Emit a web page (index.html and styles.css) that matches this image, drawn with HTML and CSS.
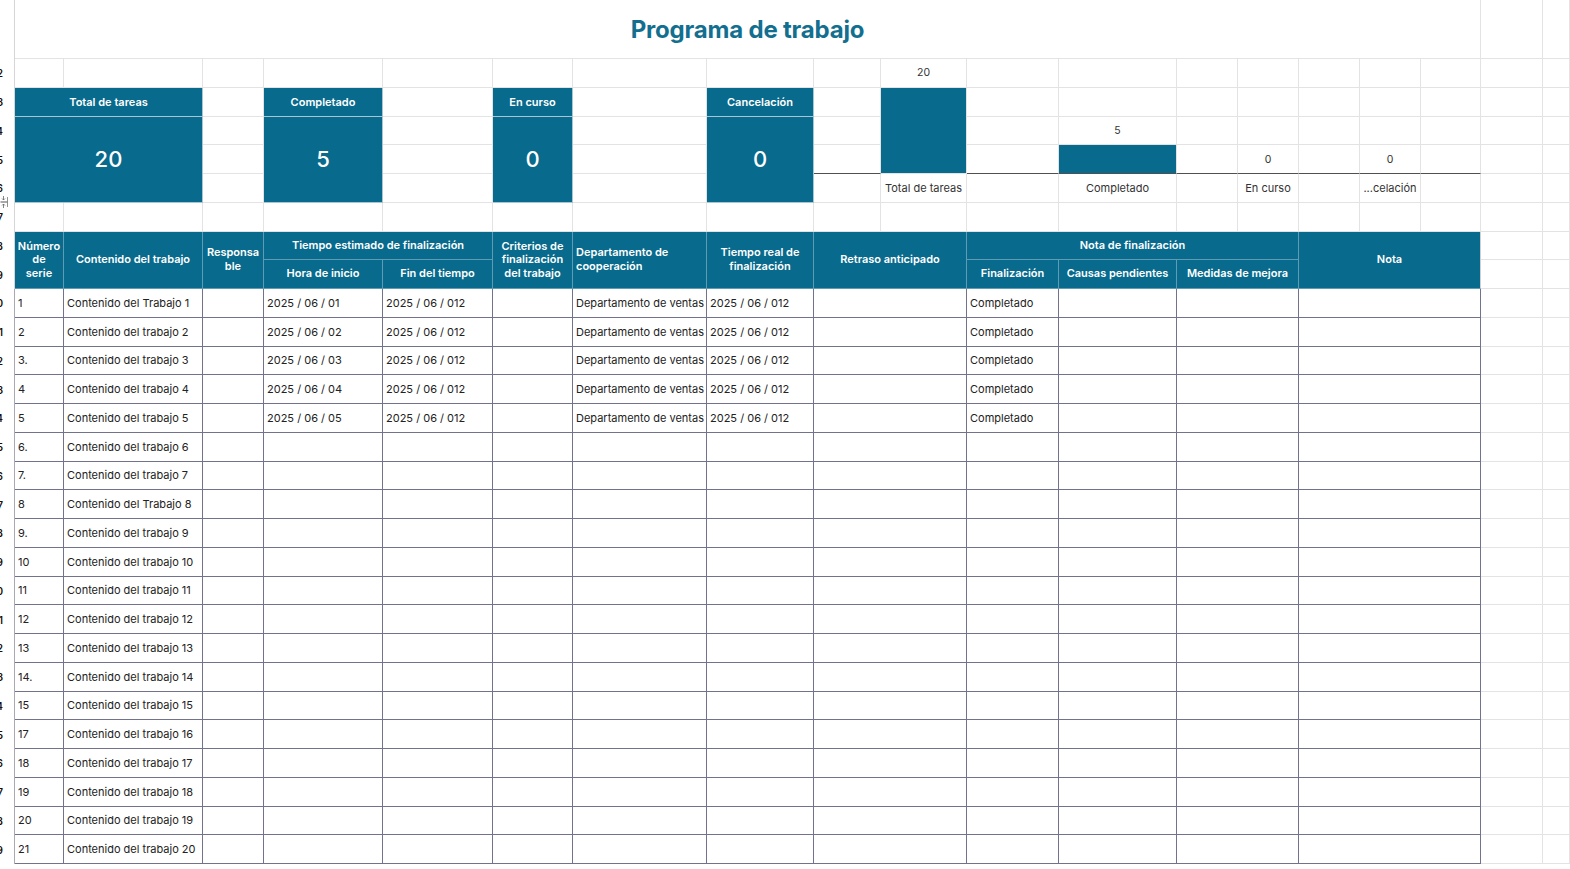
FILE: index.html
```html
<!DOCTYPE html>
<html lang="es">
<head>
<meta charset="utf-8">
<title>Programa de trabajo</title>
<link rel="stylesheet" href="styles.css">
</head>
<body>
<div class="sheet">
  <!-- row 1 -->
  <div class="c rh"></div>
  <div class="c title s17">Programa de trabajo</div>
  <div class="c"></div><div class="c"></div>

  <!-- row 2 -->
  <div class="c rh">2</div>
  <div class="c"></div><div class="c"></div><div class="c"></div><div class="c"></div><div class="c"></div>
  <div class="c"></div><div class="c"></div><div class="c"></div><div class="c"></div>
  <div class="c lbl">20</div>
  <div class="c"></div><div class="c"></div><div class="c"></div><div class="c"></div><div class="c"></div>
  <div class="c"></div><div class="c"></div><div class="c"></div><div class="c"></div>

  <!-- row 3 -->
  <div class="c rh">3</div>
  <div class="c card-head s2">Total de tareas</div>
  <div class="c"></div>
  <div class="c card-head">Completado</div>
  <div class="c"></div>
  <div class="c card-head">En curso</div>
  <div class="c"></div>
  <div class="c card-head">Cancelación</div>
  <div class="c"></div>
  <div class="c bar r3"></div>
  <div class="c"></div><div class="c"></div><div class="c"></div><div class="c"></div><div class="c"></div>
  <div class="c"></div><div class="c"></div><div class="c"></div><div class="c"></div>

  <!-- row 4 -->
  <div class="c rh">4</div>
  <div class="c card-val s2 r3">20</div>
  <div class="c"></div>
  <div class="c card-val r3">5</div>
  <div class="c"></div>
  <div class="c card-val r3">0</div>
  <div class="c"></div>
  <div class="c card-val r3">0</div>
  <div class="c"></div>
  <div class="c"></div>
  <div class="c lbl">5</div>
  <div class="c"></div><div class="c"></div><div class="c"></div><div class="c"></div><div class="c"></div>
  <div class="c"></div><div class="c"></div>

  <!-- row 5 -->
  <div class="c rh">5</div>
  <div class="c"></div>
  <div class="c"></div>
  <div class="c"></div>
  <div class="c axis"></div>
  <div class="c axis"></div>
  <div class="c bar axis"></div>
  <div class="c axis"></div>
  <div class="c axis lbl">0</div>
  <div class="c axis"></div>
  <div class="c axis lbl">0</div>
  <div class="c axis"></div>
  <div class="c"></div><div class="c"></div>

  <!-- row 6 -->
  <div class="c rh">6</div>
  <div class="c"></div>
  <div class="c"></div>
  <div class="c"></div>
  <div class="c"></div>
  <div class="c cat">Total de tareas</div>
  <div class="c"></div>
  <div class="c cat">Completado</div>
  <div class="c"></div>
  <div class="c cat">En curso</div>
  <div class="c"></div>
  <div class="c cat">...celación</div>
  <div class="c"></div>
  <div class="c"></div><div class="c"></div>

  <!-- row 7 -->
  <div class="c rh rh-icon">7
    <svg class="freeze" width="9" height="14" viewBox="0 0 9 14" aria-hidden="true">
      <path d="M0.5 7H7.5" stroke="#555" stroke-width="1"/>
      <path d="M3.5 1V5M2 3.5L3.5 5L5 3.5" stroke="#666" stroke-width="0.8" fill="none"/>
      <path d="M3.5 13V9M2 10.5L3.5 9L5 10.5" stroke="#666" stroke-width="0.8" fill="none"/>
      <path d="M7.5 2V12" stroke="#777" stroke-width="0.8"/>
    </svg>
  </div>
  <div class="c"></div><div class="c"></div><div class="c"></div><div class="c"></div><div class="c"></div>
  <div class="c"></div><div class="c"></div><div class="c"></div><div class="c"></div><div class="c"></div>
  <div class="c"></div><div class="c"></div><div class="c"></div><div class="c"></div><div class="c"></div>
  <div class="c"></div><div class="c"></div><div class="c"></div><div class="c"></div>

  <!-- row 8 header -->
  <div class="c rh">8</div>
  <div class="c hd r2">Número<br>de<br>serie</div>
  <div class="c hd r2">Contenido del trabajo</div>
  <div class="c hd r2">Responsa<br>ble</div>
  <div class="c hd s2">Tiempo estimado de finalización</div>
  <div class="c hd r2">Criterios de<br>finalización<br>del trabajo</div>
  <div class="c hd hd-left r2">Departamento de<br>cooperación</div>
  <div class="c hd r2">Tiempo real de<br>finalización</div>
  <div class="c hd s2 r2">Retraso anticipado</div>
  <div class="c hd s4">Nota de finalización</div>
  <div class="c hd hd-last s3 r2">Nota</div>
  <div class="c"></div><div class="c"></div>

  <!-- row 9 header -->
  <div class="c rh">9</div>
  <div class="c hd">Hora de inicio</div>
  <div class="c hd">Fin del tiempo</div>
  <div class="c hd">Finalización</div>
  <div class="c hd">Causas pendientes</div>
  <div class="c hd s2">Medidas de mejora</div>
  <div class="c"></div><div class="c"></div>

  <!-- data rows -->
  <div class="c rh rd">10</div><div class="c d">1</div><div class="c d">Contenido del Trabajo 1</div><div class="c d"></div><div class="c d">2025 / 06 / 01</div><div class="c d">2025 / 06 / 012</div><div class="c d"></div><div class="c d">Departamento de ventas</div><div class="c d">2025 / 06 / 012</div><div class="c d s2"></div><div class="c d">Completado</div><div class="c d"></div><div class="c d s2"></div><div class="c d s3"></div><div class="c"></div><div class="c"></div>
  <div class="c rh rd">11</div><div class="c d">2</div><div class="c d">Contenido del trabajo 2</div><div class="c d"></div><div class="c d">2025 / 06 / 02</div><div class="c d">2025 / 06 / 012</div><div class="c d"></div><div class="c d">Departamento de ventas</div><div class="c d">2025 / 06 / 012</div><div class="c d s2"></div><div class="c d">Completado</div><div class="c d"></div><div class="c d s2"></div><div class="c d s3"></div><div class="c"></div><div class="c"></div>
  <div class="c rh rd">12</div><div class="c d">3.</div><div class="c d">Contenido del trabajo 3</div><div class="c d"></div><div class="c d">2025 / 06 / 03</div><div class="c d">2025 / 06 / 012</div><div class="c d"></div><div class="c d">Departamento de ventas</div><div class="c d">2025 / 06 / 012</div><div class="c d s2"></div><div class="c d">Completado</div><div class="c d"></div><div class="c d s2"></div><div class="c d s3"></div><div class="c"></div><div class="c"></div>
  <div class="c rh rd">13</div><div class="c d">4</div><div class="c d">Contenido del trabajo 4</div><div class="c d"></div><div class="c d">2025 / 06 / 04</div><div class="c d">2025 / 06 / 012</div><div class="c d"></div><div class="c d">Departamento de ventas</div><div class="c d">2025 / 06 / 012</div><div class="c d s2"></div><div class="c d">Completado</div><div class="c d"></div><div class="c d s2"></div><div class="c d s3"></div><div class="c"></div><div class="c"></div>
  <div class="c rh rd">14</div><div class="c d">5</div><div class="c d">Contenido del trabajo 5</div><div class="c d"></div><div class="c d">2025 / 06 / 05</div><div class="c d">2025 / 06 / 012</div><div class="c d"></div><div class="c d">Departamento de ventas</div><div class="c d">2025 / 06 / 012</div><div class="c d s2"></div><div class="c d">Completado</div><div class="c d"></div><div class="c d s2"></div><div class="c d s3"></div><div class="c"></div><div class="c"></div>
  <div class="c rh rd">15</div><div class="c d">6.</div><div class="c d">Contenido del trabajo 6</div><div class="c d"></div><div class="c d"></div><div class="c d"></div><div class="c d"></div><div class="c d"></div><div class="c d"></div><div class="c d s2"></div><div class="c d"></div><div class="c d"></div><div class="c d s2"></div><div class="c d s3"></div><div class="c"></div><div class="c"></div>
  <div class="c rh rd">16</div><div class="c d">7.</div><div class="c d">Contenido del trabajo 7</div><div class="c d"></div><div class="c d"></div><div class="c d"></div><div class="c d"></div><div class="c d"></div><div class="c d"></div><div class="c d s2"></div><div class="c d"></div><div class="c d"></div><div class="c d s2"></div><div class="c d s3"></div><div class="c"></div><div class="c"></div>
  <div class="c rh rd">17</div><div class="c d">8</div><div class="c d">Contenido del Trabajo 8</div><div class="c d"></div><div class="c d"></div><div class="c d"></div><div class="c d"></div><div class="c d"></div><div class="c d"></div><div class="c d s2"></div><div class="c d"></div><div class="c d"></div><div class="c d s2"></div><div class="c d s3"></div><div class="c"></div><div class="c"></div>
  <div class="c rh rd">18</div><div class="c d">9.</div><div class="c d">Contenido del trabajo 9</div><div class="c d"></div><div class="c d"></div><div class="c d"></div><div class="c d"></div><div class="c d"></div><div class="c d"></div><div class="c d s2"></div><div class="c d"></div><div class="c d"></div><div class="c d s2"></div><div class="c d s3"></div><div class="c"></div><div class="c"></div>
  <div class="c rh rd">19</div><div class="c d">10</div><div class="c d">Contenido del trabajo 10</div><div class="c d"></div><div class="c d"></div><div class="c d"></div><div class="c d"></div><div class="c d"></div><div class="c d"></div><div class="c d s2"></div><div class="c d"></div><div class="c d"></div><div class="c d s2"></div><div class="c d s3"></div><div class="c"></div><div class="c"></div>
  <div class="c rh rd">20</div><div class="c d">11</div><div class="c d">Contenido del trabajo 11</div><div class="c d"></div><div class="c d"></div><div class="c d"></div><div class="c d"></div><div class="c d"></div><div class="c d"></div><div class="c d s2"></div><div class="c d"></div><div class="c d"></div><div class="c d s2"></div><div class="c d s3"></div><div class="c"></div><div class="c"></div>
  <div class="c rh rd">21</div><div class="c d">12</div><div class="c d">Contenido del trabajo 12</div><div class="c d"></div><div class="c d"></div><div class="c d"></div><div class="c d"></div><div class="c d"></div><div class="c d"></div><div class="c d s2"></div><div class="c d"></div><div class="c d"></div><div class="c d s2"></div><div class="c d s3"></div><div class="c"></div><div class="c"></div>
  <div class="c rh rd">22</div><div class="c d">13</div><div class="c d">Contenido del trabajo 13</div><div class="c d"></div><div class="c d"></div><div class="c d"></div><div class="c d"></div><div class="c d"></div><div class="c d"></div><div class="c d s2"></div><div class="c d"></div><div class="c d"></div><div class="c d s2"></div><div class="c d s3"></div><div class="c"></div><div class="c"></div>
  <div class="c rh rd">23</div><div class="c d">14.</div><div class="c d">Contenido del trabajo 14</div><div class="c d"></div><div class="c d"></div><div class="c d"></div><div class="c d"></div><div class="c d"></div><div class="c d"></div><div class="c d s2"></div><div class="c d"></div><div class="c d"></div><div class="c d s2"></div><div class="c d s3"></div><div class="c"></div><div class="c"></div>
  <div class="c rh rd">24</div><div class="c d">15</div><div class="c d">Contenido del trabajo 15</div><div class="c d"></div><div class="c d"></div><div class="c d"></div><div class="c d"></div><div class="c d"></div><div class="c d"></div><div class="c d s2"></div><div class="c d"></div><div class="c d"></div><div class="c d s2"></div><div class="c d s3"></div><div class="c"></div><div class="c"></div>
  <div class="c rh rd">25</div><div class="c d">17</div><div class="c d">Contenido del trabajo 16</div><div class="c d"></div><div class="c d"></div><div class="c d"></div><div class="c d"></div><div class="c d"></div><div class="c d"></div><div class="c d s2"></div><div class="c d"></div><div class="c d"></div><div class="c d s2"></div><div class="c d s3"></div><div class="c"></div><div class="c"></div>
  <div class="c rh rd">26</div><div class="c d">18</div><div class="c d">Contenido del trabajo 17</div><div class="c d"></div><div class="c d"></div><div class="c d"></div><div class="c d"></div><div class="c d"></div><div class="c d"></div><div class="c d s2"></div><div class="c d"></div><div class="c d"></div><div class="c d s2"></div><div class="c d s3"></div><div class="c"></div><div class="c"></div>
  <div class="c rh rd">27</div><div class="c d">19</div><div class="c d">Contenido del trabajo 18</div><div class="c d"></div><div class="c d"></div><div class="c d"></div><div class="c d"></div><div class="c d"></div><div class="c d"></div><div class="c d s2"></div><div class="c d"></div><div class="c d"></div><div class="c d s2"></div><div class="c d s3"></div><div class="c"></div><div class="c"></div>
  <div class="c rh rd">28</div><div class="c d">20</div><div class="c d">Contenido del trabajo 19</div><div class="c d"></div><div class="c d"></div><div class="c d"></div><div class="c d"></div><div class="c d"></div><div class="c d"></div><div class="c d s2"></div><div class="c d"></div><div class="c d"></div><div class="c d s2"></div><div class="c d s3"></div><div class="c"></div><div class="c"></div>
  <div class="c rh rd">29</div><div class="c d">21</div><div class="c d">Contenido del trabajo 20</div><div class="c d"></div><div class="c d"></div><div class="c d"></div><div class="c d"></div><div class="c d"></div><div class="c d"></div><div class="c d s2"></div><div class="c d"></div><div class="c d"></div><div class="c d s2"></div><div class="c d s3"></div><div class="c"></div><div class="c"></div>
</div>
</body>
</html>
```

FILE: styles.css
```css
* { box-sizing: border-box; }
html, body { margin: 0; padding: 0; background: #fff; }
body {
  width: 1570px;
  height: 869px;
  overflow: hidden;
  font-family: Inter, "Noto Sans", sans-serif;
  color: #1f1f1f;
}
.sheet {
  display: grid;
  grid-template-columns: 15px 49px 139px 61px 119px 110px 80px 134px 107px 67px 86px 92px 118px 61px 61px 61px 61px 60px 62px 27px;
  grid-template-rows: 59px repeat(28, 28.75px);
}
.c {
  border-right: 1px solid #e3e3e3;
  border-bottom: 1px solid #e3e3e3;
  display: flex;
  align-items: center;
  padding: 0 3px;
  font-size: 11px;
  white-space: nowrap;
  overflow: hidden;
  min-width: 0;
}
.s2 { grid-column: span 2; }
.s3 { grid-column: span 3; }
.s4 { grid-column: span 4; }
.s17 { grid-column: span 17; }
.r2 { grid-row: span 2; }
.r3 { grid-row: span 3; }

/* row header */
.rh {
  border-bottom: none;
  border-right: 1px solid #d6d6d6;
  justify-content: flex-end;
  padding: 0 11px 0 0;
  font-size: 10px;
  font-weight: 600;
  color: #111;
}
.rh.rd { border-right-color: #a9a9b0; }
.rh-icon { position: relative; overflow: visible; }
.rh-icon .freeze { position: absolute; left: 0; top: -8px; background: #fff; }

/* title */
.title {
  justify-content: center;
  font-size: 24px;
  font-weight: 700;
  color: #136f8f;
  letter-spacing: -0.2px;
}

/* summary cards */
.card-head {
  background: #086a8c;
  color: #fff;
  justify-content: center;
  font-weight: 600;
  font-size: 11px;
  border-color: #a7c6d3;
}
.card-val {
  background: #086a8c;
  color: #fff;
  justify-content: center;
  font-size: 22px;
  font-weight: 500;
  border-color: #a7c6d3;
}

/* chart */
.bar { background: #086a8c; }
.axis { border-bottom: 1px solid #505050; }
.lbl { justify-content: center; font-size: 10.5px; color: #333; }
.cat { justify-content: center; font-size: 11px; color: #333; }

/* table header */
.hd {
  background: #086a8c;
  color: #fff;
  font-weight: 600;
  font-size: 11px;
  line-height: 13.5px;
  justify-content: center;
  text-align: center;
  white-space: normal;
  border-color: #5f9bb3;
}
.hd-left { justify-content: flex-start; text-align: left; }
.hd-last { border-right-color: #d0d0d0; }

/* data cells */
.d {
  border-right: 1px solid #70738a;
  border-bottom: 1px solid #70738a;
  color: #222;
}
```
